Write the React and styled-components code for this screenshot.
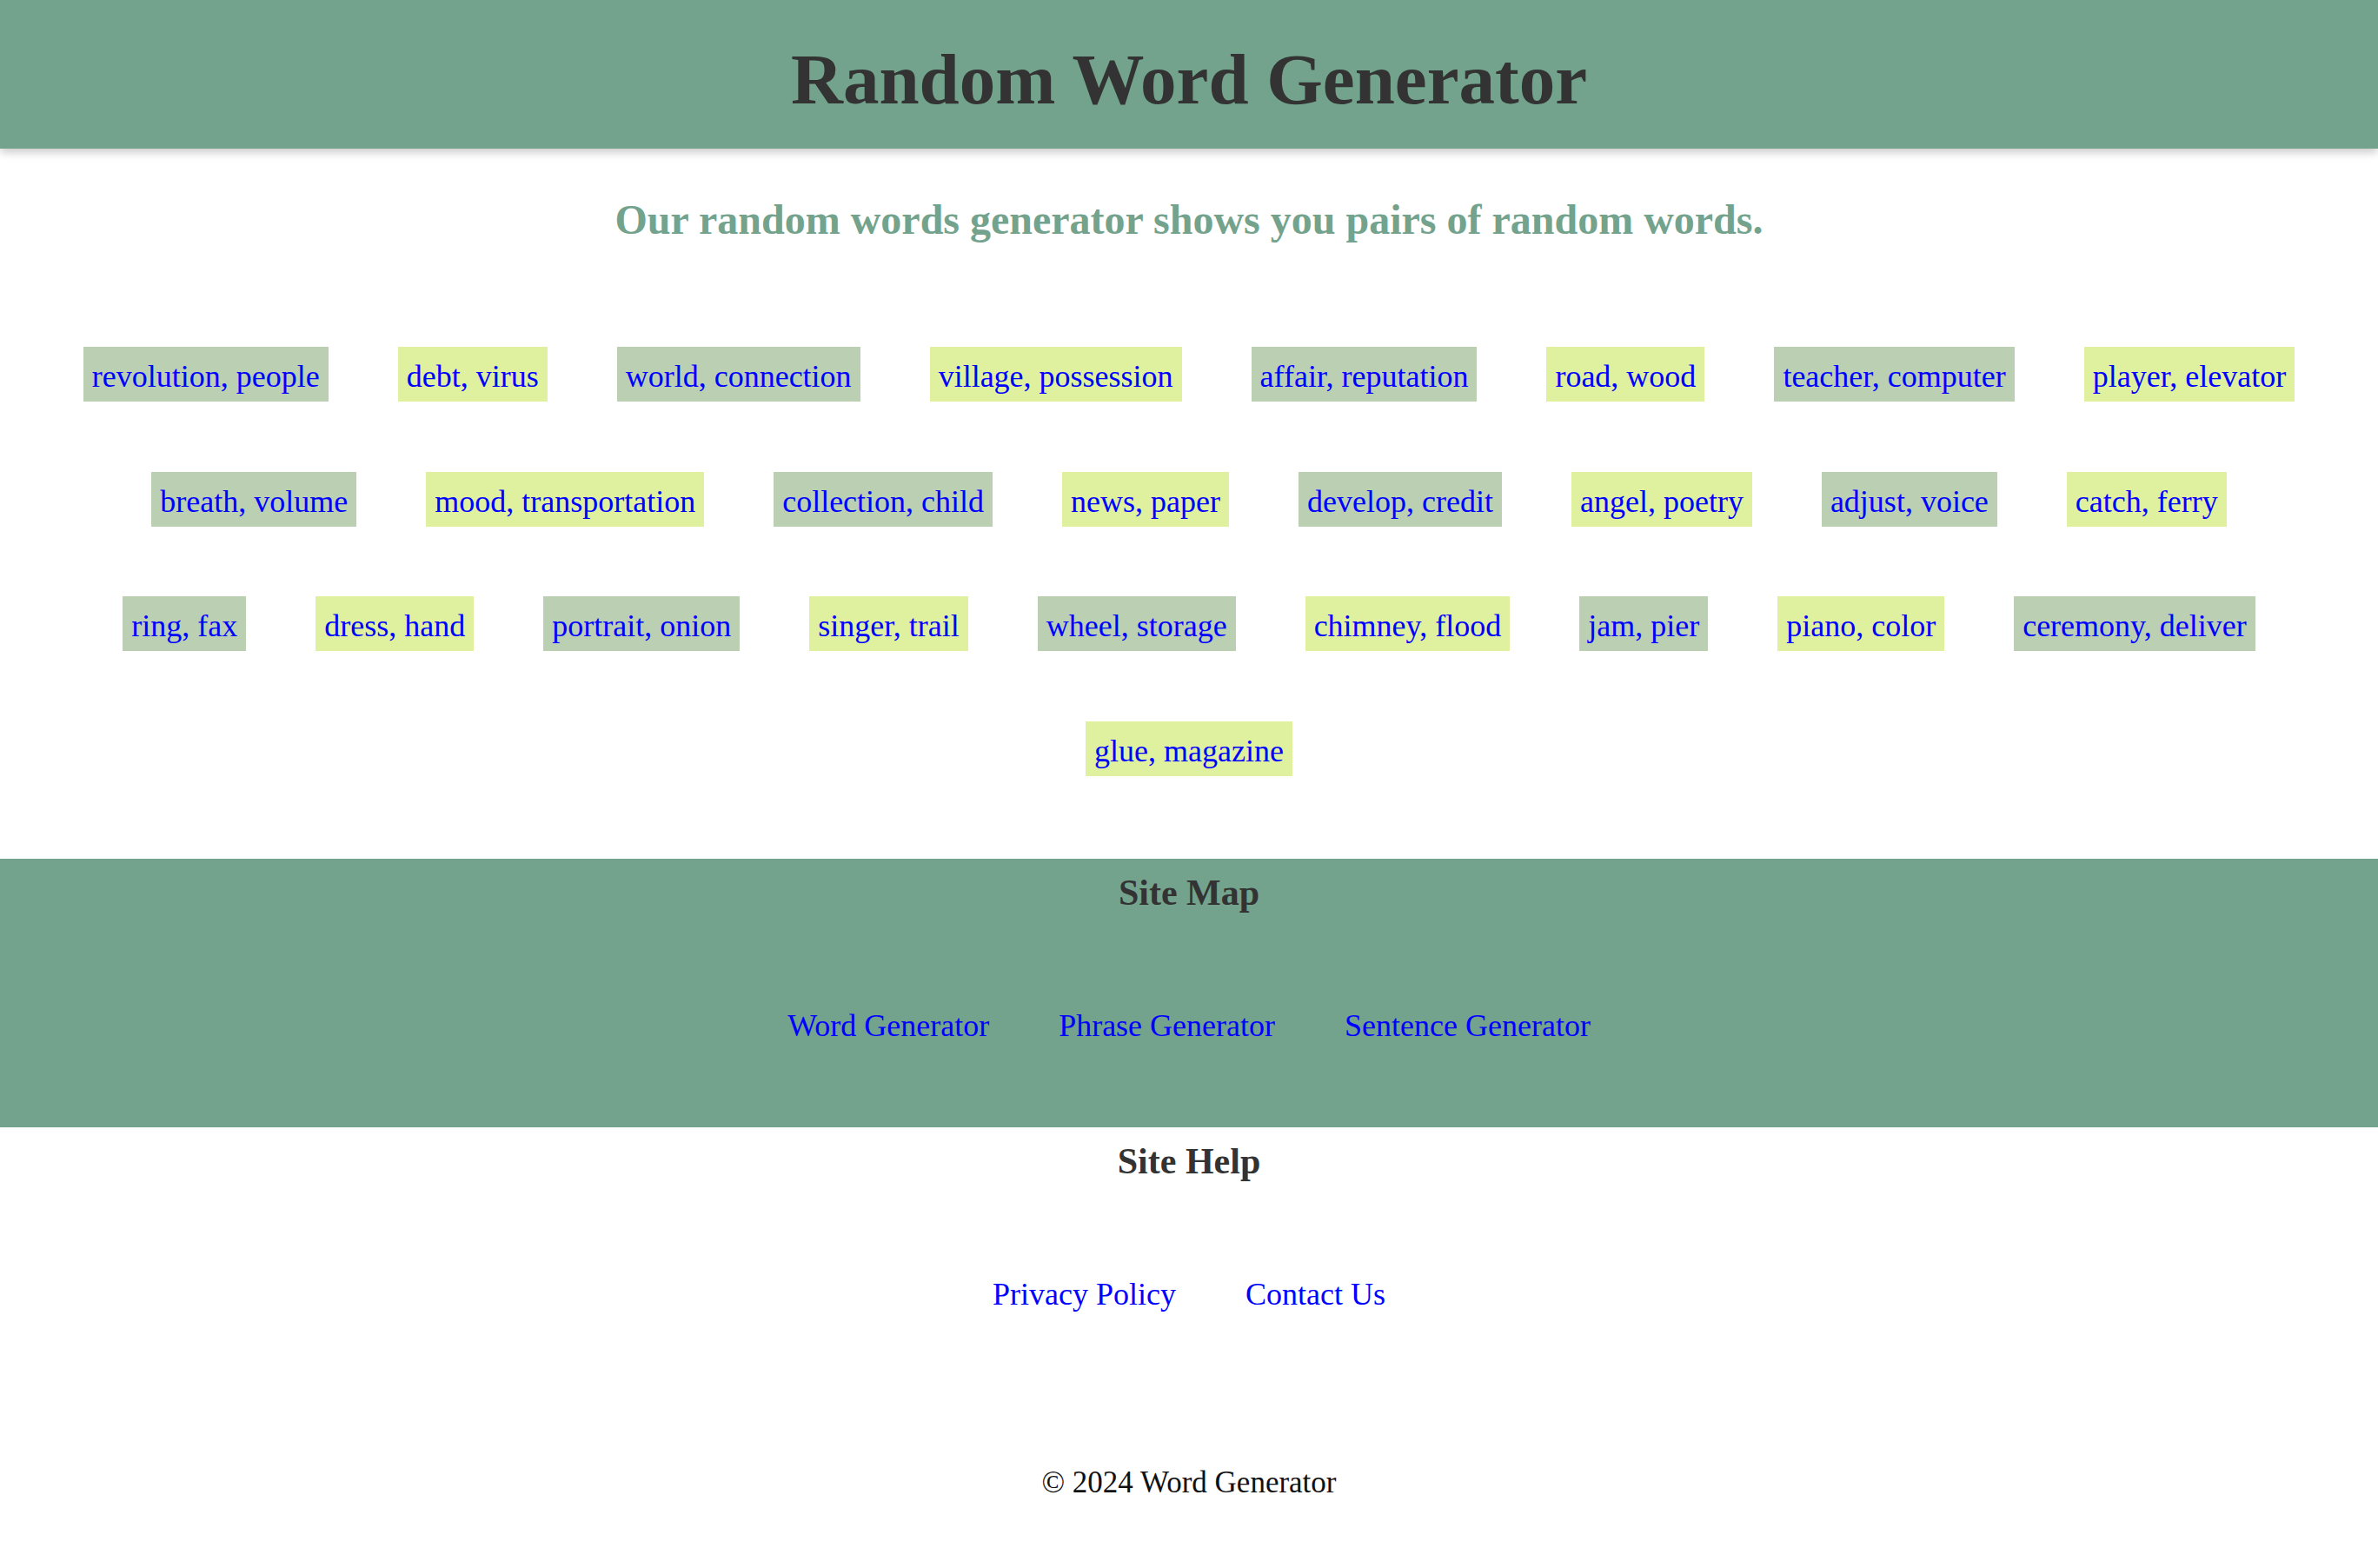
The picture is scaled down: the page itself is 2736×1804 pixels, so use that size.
import styled, { createGlobalStyle } from 'styled-components'

const GlobalStyle = createGlobalStyle`
    html, body {
        margin: 0;
        padding: 0;
        background: #ffffff;
    }
    body {
        font-family: 'Liberation Serif', 'Times New Roman', serif;
    }
`;

const words = [
    'revolution, people', 'debt, virus', 'world, connection', 'village, possession',
    'affair, reputation', 'road, wood', 'teacher, computer', 'player, elevator',
    'breath, volume', 'mood, transportation', 'collection, child', 'news, paper',
    'develop, credit', 'angel, poetry', 'adjust, voice', 'catch, ferry',
    'ring, fax', 'dress, hand', 'portrait, onion', 'singer, trail',
    'wheel, storage', 'chimney, flood', 'jam, pier', 'piano, color',
    'ceremony, deliver', 'glue, magazine',
];

const Header = styled.header`
    background-color: #73a38d;
    height: 171px;
    box-sizing: border-box;
    padding-top: 50px;
    box-shadow: 0 4px 10px rgba(0, 0, 0, 0.22);
    position: relative;
    z-index: 1;
`;

const Title = styled.h1`
    margin: 0;
    text-align: center;
    font-size: 83px;
    line-height: 1;
    font-weight: 700;
    color: #333333;
`;

const Subtitle = styled.h2`
    margin: 58px 0 0;
    text-align: center;
    font-size: 48px;
    line-height: 1;
    font-weight: 700;
    color: #73a38d;
`;

const WordList = styled.div`
    display: flex;
    flex-wrap: wrap;
    justify-content: center;
    gap: 80.5px 80px;
    margin-top: 122px;
    padding: 0 81px;
`;

const Word = styled.span`
    box-sizing: border-box;
    height: 63px;
    padding: 6px 10px 0;
    font-size: 36px;
    line-height: 57px;
    color: #0000ff;
    white-space: nowrap;
    background-color: ${props => props.$alt ? '#dff09f' : '#bbcfb3'};
`;

const Section = styled.section`
    background-color: ${props => props.$green ? '#73a38d' : 'transparent'};
    margin-top: ${props => props.$offset || 0}px;
    padding: 18px 0 99px;
`;

const SectionTitle = styled.h3`
    margin: 0;
    text-align: center;
    font-size: 42px;
    line-height: 1;
    font-weight: 700;
    color: #333333;
`;

const LinkRow = styled.nav`
    display: flex;
    justify-content: center;
    gap: 80px;
    margin-top: 114px;
`;

const Link = styled.a`
    font-size: 36px;
    line-height: 1;
    color: #0000ff;
    text-decoration: none;
`;

const Copyright = styled.p`
    margin: 82px 0 0;
    text-align: center;
    font-size: 35px;
    line-height: 1;
    color: #111111;
`;

const App = () => {
  return (
    <>
      <GlobalStyle />
      <Header>
        <Title>Random Word Generator</Title>
      </Header>
      <Subtitle>Our random words generator shows you pairs of random words.</Subtitle>
      <WordList>
        {words.map((w, i) => (
          <Word key={w} $alt={i % 2 === 1}>{w}</Word>
        ))}
      </WordList>
      <Section $green $offset={95}>
        <SectionTitle>Site Map</SectionTitle>
        <LinkRow>
          <Link href="#">Word Generator</Link>
          <Link href="#">Phrase Generator</Link>
          <Link href="#">Sentence Generator</Link>
        </LinkRow>
      </Section>
      <Section>
        <SectionTitle>Site Help</SectionTitle>
        <LinkRow>
          <Link href="#">Privacy Policy</Link>
          <Link href="#">Contact Us</Link>
        </LinkRow>
      </Section>
      <Copyright>© 2024 Word Generator</Copyright>
    </>
  )
}

export default App
